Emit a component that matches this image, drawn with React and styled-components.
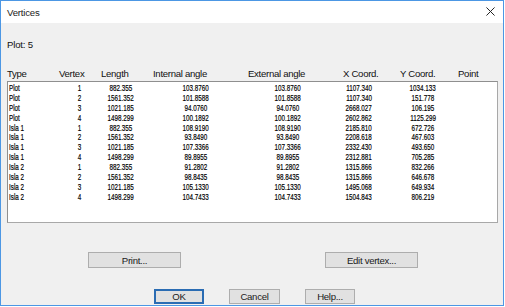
import React from "react";
import styled, { createGlobalStyle } from "styled-components";

const Global = createGlobalStyle`
  html, body { margin: 0; padding: 0; background: #ffffff; }
  body { font-family: "Liberation Sans", Arial, sans-serif; }
`;

const Window = styled.div`
  width: 502px;
  height: 304px;
  border: 1px solid #4c97e4;
  background: #f0f0f0;
  display: flex;
  flex-direction: column;
  color: #111;
  font-size: 9.6px;
`;

const TitleBar = styled.div`
  height: 22px;
  background: #ffffff;
  display: flex;
  align-items: center;
  justify-content: space-between;
  padding: 0 8px 0 6px;
`;

const Title = styled.span`
  font-size: 9.6px;
  letter-spacing: -0.2px;
  color: #1a1a1a;
`;

const CloseIcon = styled.svg`
  width: 9px;
  height: 9px;
  margin-top: -1px;
`;

const Body = styled.div`
  flex: 1;
  display: flex;
  flex-direction: column;
  padding: 16px 5px 0 6px;
`;

const PlotLabel = styled.div`
  height: 12px;
  line-height: 12px;
  letter-spacing: -0.2px;
`;

const HeaderRow = styled.div`
  display: grid;
  grid-template-columns: 52px 42px 52px 95px 95px 57px 58px 1fr;
  margin-top: 17px;
  height: 12px;
  line-height: 12px;
  letter-spacing: -0.3px;
`;

const ListBox = styled.div`
  margin-top: 1px;
  height: 139px;
  border: 1px solid #8f8f8f;
  border-right-color: #a8a8a8;
  border-bottom-color: #a8a8a8;
  background: #ffffff;
  padding-top: 1px;
  box-sizing: content-box;
  width: 489px;
`;

const DataRow = styled.div`
  display: grid;
  grid-template-columns: 54px 34px 48px 102px 82px 60px 68px 1fr;
  height: 9.9px;
  line-height: 9.9px;
  padding-left: 1px;
  font-size: 9.4px;
  color: #000;
`;

const Cell = styled.span`
  text-align: ${(p) => (p.$left ? "left" : "center")};
  white-space: nowrap;
`;

const Squeeze = styled.span`
  display: inline-block;
  transform: scaleX(0.67);
  transform-origin: ${(p) => (p.$left ? "left" : "center")} center;
  -webkit-text-stroke: 0.2px #000;
`;

const ActionRow = styled.div`
  display: flex;
  margin-top: 29px;
  padding-left: 81px;
  gap: 144px;
`;

const DialogRow = styled.div`
  display: flex;
  margin-top: 21px;
  padding-left: 147px;
  gap: 25px;
`;

const Button = styled.button`
  box-sizing: border-box;
  width: ${(p) => p.$w}px;
  height: ${(p) => p.$h}px;
  background: #e1e1e1;
  border: ${(p) => (p.$default ? "2px solid #2a6cb3" : "1px solid #adadad")};
  font-family: "Liberation Sans", Arial, sans-serif;
  font-size: 9.6px;
  letter-spacing: -0.3px;
  color: #1a1a1a;
  padding: 0;
  display: flex;
  align-items: center;
  justify-content: center;
`;

const rows = [
  ["Plot", "1", "882.355", "103.8760", "103.8760", "1107.340", "1034.133"],
  ["Plot", "2", "1561.352", "101.8588", "101.8588", "1107.340", "151.778"],
  ["Plot", "3", "1021.185", "94.0760", "94.0760", "2668.027", "106.195"],
  ["Plot", "4", "1498.299", "100.1892", "100.1892", "2602.862", "1125.299"],
  ["Isla 1", "1", "882.355", "108.9190", "108.9190", "2185.810", "672.726"],
  ["Isla 1", "2", "1561.352", "93.8490", "93.8490", "2208.618", "467.603"],
  ["Isla 1", "3", "1021.185", "107.3366", "107.3366", "2332.430", "493.650"],
  ["Isla 1", "4", "1498.299", "89.8955", "89.8955", "2312.881", "705.285"],
  ["Isla 2", "1", "882.355", "91.2802", "91.2802", "1315.866", "832.266"],
  ["Isla 2", "2", "1561.352", "98.8435", "98.8435", "1315.866", "646.678"],
  ["Isla 2", "3", "1021.185", "105.1330", "105.1330", "1495.068", "649.934"],
  ["Isla 2", "4", "1498.299", "104.7433", "104.7433", "1504.843", "806.219"],
];

const headers = ["Type", "Vertex", "Length", "Internal angle", "External angle", "X Coord.", "Y Coord.", "Point"];

export default function App() {
  return (
    <>
      <Global />
      <Window>
        <TitleBar>
          <Title>Vertices</Title>
          <CloseIcon viewBox="0 0 10 10">
            <path d="M0.5 0.5 L9.5 9.5 M9.5 0.5 L0.5 9.5" stroke="#222" strokeWidth="1.1" fill="none" />
          </CloseIcon>
        </TitleBar>
        <Body>
          <PlotLabel>Plot: 5</PlotLabel>
          <HeaderRow>
            {headers.map((h) => (
              <span key={h}>{h}</span>
            ))}
          </HeaderRow>
          <ListBox>
            {rows.map((r, i) => (
              <DataRow key={i}>
                <Cell $left>
                  <Squeeze $left>{r[0]}</Squeeze>
                </Cell>
                {r.slice(1).map((c, j) => (
                  <Cell key={j}>
                    <Squeeze>{c}</Squeeze>
                  </Cell>
                ))}
                <Cell />
              </DataRow>
            ))}
          </ListBox>
          <ActionRow>
            <Button $w={93} $h={16}>Print...</Button>
            <Button $w={93} $h={16}>Edit vertex...</Button>
          </ActionRow>
          <DialogRow>
            <Button $w={50} $h={15} $default>OK</Button>
            <Button $w={51} $h={15}>Cancel</Button>
            <Button $w={50} $h={15}>Help...</Button>
          </DialogRow>
        </Body>
      </Window>
    </>
  );
}
